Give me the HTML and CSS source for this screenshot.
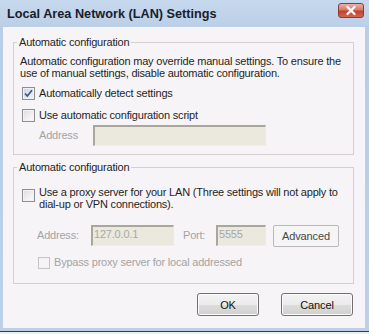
FILE: index.html
```html
<!DOCTYPE html>
<html>
<head>
<meta charset="utf-8">
<link rel="stylesheet" href="styles.css">
</head>
<body>
<div class="window">
  <div class="titlebar">
    <span class="title">Local Area Network (LAN) Settings</span>
    <span class="close"><svg width="26" height="15" viewBox="0 0 26 15"><path d="M9.5 4 L16.5 11 M16.5 4 L9.5 11" stroke="#fff" stroke-width="2.3" stroke-linecap="round"/></svg></span>
  </div>
  <div class="frame">
    <div class="client">
      <fieldset class="group g1">
        <legend>Automatic configuration</legend>
        <div class="inner">
          <p class="desc">Automatic configuration may override manual settings. To ensure the<br>use of manual settings, disable automatic configuration.</p>
          <div class="check c1"><span class="box checked"><svg width="11" height="11" viewBox="0 0 11 11"><path d="M2 5.5 L4.3 8 L9 2.3" fill="none" stroke="#3d5187" stroke-width="1.6"/></svg></span><span>Automatically detect settings</span></div>
          <div class="check c2"><span class="box"></span><span>Use automatic configuration script</span></div>
          <div class="addr1"><span class="lbl dis">Address</span><span class="field f1"></span></div>
        </div>
      </fieldset>
      <fieldset class="group g2">
        <legend>Automatic configuration</legend>
        <div class="inner">
          <div class="check c3"><span class="box"></span><span class="multi">Use a proxy server for your LAN (Three settings will not apply to<br>dial-up or VPN connections).</span></div>
          <div class="addr2">
            <span class="lbl dis l-addr">Address:</span><span class="field f2">127.0.0.1</span>
            <span class="lbl dis l-port">Port:</span><span class="field f3">5555</span>
            <span class="btn adv">Advanced</span>
          </div>
          <div class="check c4"><span class="box small dbox"></span><span class="dis">Bypass proxy server for local addressed</span></div>
        </div>
      </fieldset>
      <div class="buttons">
        <span class="btn main ok">OK</span>
        <span class="btn main cancel">Cancel</span>
      </div>
    </div>
  </div>
</div>
</body>
</html>
```
FILE: styles.css
```css
* { box-sizing: border-box; }
html, body { margin: 0; padding: 0; }
body {
  width: 369px;
  height: 334px;
  overflow: hidden;
  background: #eeeeee;
  font-family: "Liberation Sans", Arial, sans-serif;
  font-size: 11px;
  letter-spacing: -0.2px;
  color: #1f1f1f;
}
.window {
  width: 369px;
  background: linear-gradient(#c6d8ed, #b9cee6 30px, #bcd0e8);
  border-bottom: 1px solid #3a3a3a;
}
.titlebar {
  height: 27px;
  display: flex;
  align-items: flex-start;
}
.title {
  margin-top: 7px;
  padding-left: 7px;
  line-height: 15px;
  font-size: 12.7px;
  font-weight: bold;
  letter-spacing: 0;
  color: #18202c;
}
.close {
  margin-left: auto;
  margin-right: 5px;
  margin-top: 3px;
  width: 26px;
  height: 15px;
  border: 1px solid #8a3c33;
  border-radius: 3px;
  background: linear-gradient(#eab1a6, #d87968 45%, #c14331 55%, #d2644f);
  display: flex;
}
.close svg { margin: -1px; }
.frame {
  padding: 0 4px 3px 3px;
}
.client {
  background: #f7f4f7;
  padding: 9px 0 12px 10px;
}
.group {
  margin: 0;
  padding: 0;
  width: 341px;
  min-width: 0;
  border: 1px solid #d4d0d1;
}
.group legend {
  padding: 0 2px;
  margin-left: 3px;
  line-height: 13px;
  color: #1f1f1f;
}
.g2 { margin-top: 6px; }
.inner { padding-left: 6px; }
.g1 .inner { padding-bottom: 8px; }
.g2 .inner { padding-bottom: 14px; }
.desc {
  margin: 6px 0 0;
  line-height: 12px;
}
.check {
  display: flex;
  align-items: center;
  margin-left: 2px;
  line-height: 13px;
}
.c1 { margin-top: 8px; }
.c2 { margin-top: 9px; }
.c3 { margin-top: 12px; align-items: flex-start; line-height: 12px; }
.c3 .box { margin-top: 3px; }
.c4 { margin-top: 9px; margin-left: 18px; }
.box {
  width: 13px;
  height: 13px;
  flex: none;
  margin-right: 4px;
  border: 1px solid #8e8f8f;
  background: linear-gradient(135deg, #dcdcdc, #f4f4f4 70%, #fbfbfb);
  box-shadow: inset 0 0 0 1px #f2f2f2;
  display: flex;
  align-items: center;
  justify-content: center;
}
.box.checked {
  background: linear-gradient(135deg, #c9d3e6, #e6ebf4 70%, #f1f4f8);
  box-shadow: inset 0 0 0 1px #eef1f6;
}
.box.small { width: 12px; height: 12px; }
.dbox {
  border-color: #c4c4c4;
  background: #f5f4f5;
  box-shadow: none;
}
.dis { color: #a3a3a3; }
.addr1 {
  display: flex;
  margin-top: 3px;
  padding-left: 19px;
}
.addr1 .lbl { width: 54px; line-height: 21px; }
.field {
  height: 21px;
  background: #ebe9de;
  border-style: solid;
  border-width: 2px 1px 1px 2px;
  border-color: #a9a69c #eceae2 #f0eee8 #a9a69c;
  color: #a8a8a8;
  padding: 1px 0 0 1px;
  line-height: 13px;
}
.f1 { width: 173px; }
.addr2 {
  display: flex;
  align-items: flex-start;
  margin-top: 15px;
  padding-left: 17px;
}
.addr2 .lbl { line-height: 21px; }
.l-addr { width: 54px; }
.f2 { width: 83px; }
.l-port { width: 33px; margin-left: 9px; }
.f3 { width: 50px; }
.btn {
  display: flex;
  align-items: center;
  justify-content: center;
  letter-spacing: -0.1px;
}
.adv {
  margin-left: 7px;
  width: 66px;
  height: 22px;
  border: 1px solid #b6b8ba;
  border-radius: 2px;
  background: #f5f5f5;
  color: #474747;
}
.buttons {
  display: flex;
  justify-content: flex-end;
  gap: 22px;
  margin-top: 9px;
  padding-right: 12px;
}
.main {
  height: 23px;
  border: 1px solid #717171;
  border-radius: 3px;
  background: linear-gradient(#f3f3f3, #ebebeb 50%, #dddddd 51%, #d0d0d0);
  box-shadow: inset 0 0 0 1px #fbfbfb;
  color: #111;
}
.ok { width: 62px; }
.cancel { width: 72px; }
```
